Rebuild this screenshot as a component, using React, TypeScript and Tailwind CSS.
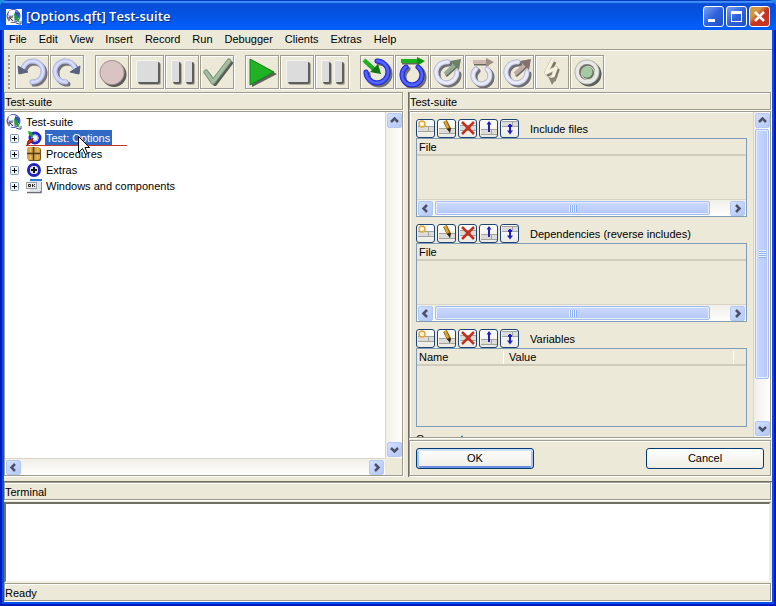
import { useState } from "react";
import type { ReactNode } from "react";
import clsx from "clsx";

const etched =
  "border border-[#9f9c8e] shadow-[1px_1px_0_#fff,inset_1px_1px_0_#fff]";

const menus = [
  "File",
  "Edit",
  "View",
  "Insert",
  "Record",
  "Run",
  "Debugger",
  "Clients",
  "Extras",
  "Help",
];

/* ---------- toolbar drawings ---------- */

function UndoIcon({ flip = false }: { flip?: boolean }) {
  const arc = "M7 12C9 7 13 5 17 5A10.5 10.5 0 0 1 16 26";
  const head = "M2 10L3 18L12 16Z";
  const mirror = flip ? "translate(31 0) scale(-1 1)" : undefined;
  return (
    <svg viewBox="0 0 32 32" className="size-8" fill="none">
      <g transform="translate(2 2)" opacity="0.8">
        <g transform={mirror}>
          <path d={arc} stroke="#55565c" strokeWidth="5" strokeLinecap="round" />
        </g>
      </g>
      <g transform={mirror}>
        <path d={arc} stroke="#a0a8dd" strokeWidth="5" strokeLinecap="round" />
        <path d={arc} stroke="#c3caf8" strokeWidth="4" strokeLinecap="round" />
        <path d={arc} stroke="#dde1fd" strokeWidth="1.5" strokeLinecap="round" />
        <path d={head} fill="#59617f" stroke="#59617f" strokeLinejoin="round" />
      </g>
    </svg>
  );
}

function RecordIcon() {
  return (
    <svg viewBox="0 0 32 32" className="size-8">
      <circle cx="18" cy="18.5" r="12.5" fill="#5f5b58" />
      <circle cx="16" cy="16.5" r="12.5" fill="#a39594" />
      <circle cx="16" cy="16.5" r="11.5" fill="#dac3c3" />
    </svg>
  );
}

function Block({ x, width }: { x: number; width: number }) {
  return (
    <>
      <rect x={x + 3} y="7" width={width} height="22" rx="2" fill="#b0ada3" />
      <rect x={x + 2} y="6" width={width} height="22" rx="2" fill="#5f5e5b" />
      <rect x={x} y="4" width={width} height="22" rx="2" fill="#f6f6f4" />
      <rect x={x + 1} y="5" width={width - 1} height="21" rx="1" fill="#dcdcdc" />
    </>
  );
}

function StopIcon() {
  return (
    <svg viewBox="0 0 32 32" className="size-8">
      <Block x={5} width={22} />
    </svg>
  );
}

function PauseIcon() {
  return (
    <svg viewBox="0 0 32 32" className="size-8">
      <Block x={5} width={8} />
      <Block x={18} width={8} />
    </svg>
  );
}

function CheckIcon() {
  const d = "M5 16L12 26L28 5";
  return (
    <svg
      viewBox="0 0 32 32"
      className="size-8"
      fill="none"
      strokeLinecap="round"
      strokeLinejoin="round"
    >
      <path d={d} stroke="#585c56" strokeWidth="4" transform="translate(2 2)" />
      <path d={d} stroke="#7d967d" strokeWidth="5" />
      <path d={d} stroke="#a3bfa2" strokeWidth="3" />
    </svg>
  );
}

function PlayIcon() {
  return (
    <svg viewBox="0 0 32 32" className="size-8">
      <path d="M6 5L31 18L6 31Z" fill="#5f615c" />
      <path d="M4 3L28 16L4 29Z" fill="#1eb224" stroke="#148319" />
    </svg>
  );
}

interface RingProps {
  arc: string;
  shaft: string;
  head: string;
  tone: "blue" | "pale";
  arrow: string;
  tip: string;
}

function RingIcon({ arc, shaft, head, tone, arrow, tip }: RingProps) {
  const blue = tone === "blue";
  return (
    <svg viewBox="0 0 32 32" className="size-8" fill="none" strokeLinecap="round">
      <path d={arc} stroke="#706f70" strokeWidth="5" transform="translate(2 2)" />
      <path d={arc} stroke={blue ? "#1c1cc4" : "#a6a7c2"} strokeWidth="5" />
      <path d={arc} stroke={blue ? "#3240ee" : "#d6d9f0"} strokeWidth="4" />
      <path d={arc} stroke={blue ? "#5468f8" : "#ecedfa"} strokeWidth="2" />
      <g strokeLinecap="butt">
        <path d={shaft} stroke="#66685f" strokeWidth="3" transform="translate(1 2)" />
        <path d={shaft} stroke={arrow} strokeWidth="4" />
      </g>
      <path d={head} fill={tip} />
    </svg>
  );
}

function StepIntoIcon() {
  return (
    <RingIcon
      tone="blue"
      arc="M16 5A11 11 0 1 1 5 16"
      shaft="M3 4L14 14"
      head="M20 18L9 16L17 8Z"
      arrow="#18b31f"
      tip="#117816"
    />
  );
}

function StepOverIcon() {
  return (
    <RingIcon
      tone="blue"
      arc="M10 11A10 10 0 1 0 22 11"
      shaft="M5 5H22"
      head="M21 1L29 5L21 10Z"
      arrow="#18b31f"
      tip="#128f18"
    />
  );
}

function StepOutIcon({ failed = false }: { failed?: boolean }) {
  return (
    <RingIcon
      tone="pale"
      arc="M17 6A10.5 10.5 0 1 0 26 16"
      shaft="M14 18L25 8"
      head="M30 3L19 5L28 14Z"
      arrow={failed ? "#c3aaa6" : "#93ab92"}
      tip={failed ? "#84706c" : "#6d8069"}
    />
  );
}

function RepeatIcon() {
  return (
    <RingIcon
      tone="pale"
      arc="M10 13A8.5 8.5 0 1 0 21 13"
      shaft="M7 6H22"
      head="M20 2L28 6L20 11Z"
      arrow="#cdb8b2"
      tip="#a28d88"
    />
  );
}

function BoltIcon() {
  return (
    <svg viewBox="0 0 32 32" className="size-8" fill="none">
      <path
        d="M17 4L10 17L20 12L16 23"
        stroke="#77746c"
        strokeWidth="3"
        strokeLinejoin="round"
        transform="translate(2 2)"
      />
      <path d="M17 3L10 17L20 12L16 23" stroke="#c5bea6" strokeWidth="4" strokeLinejoin="round" />
      <path d="M17 3L10 17L20 12L16 23" stroke="#f7f1df" strokeWidth="3" strokeLinejoin="round" />
      <path d="M12 20L15 22L22 20L16 29Z" fill="#8c8675" />
    </svg>
  );
}

function TargetIcon() {
  return (
    <svg viewBox="0 0 32 32" className="size-8" fill="none">
      <circle cx="18" cy="18" r="12.5" fill="#5d5d59" />
      <circle cx="16" cy="16" r="12.5" fill="#b3b3ae" />
      <circle cx="16" cy="16" r="11.5" fill="#e9e9e6" />
      <circle cx="16" cy="16" r="8" fill="#77776f" />
      <circle cx="17" cy="17" r="7" fill="#dddcd2" />
      <circle cx="17" cy="17" r="6" fill="#64705f" />
      <circle cx="16" cy="16" r="5.5" fill="#a5c9a5" />
    </svg>
  );
}

const toolGroups: { label: string; icon: ReactNode }[][] = [
  [
    { label: "Undo", icon: <UndoIcon /> },
    { label: "Redo", icon: <UndoIcon flip /> },
  ],
  [
    { label: "Record", icon: <RecordIcon /> },
    { label: "Stop recording", icon: <StopIcon /> },
    { label: "Pause recording", icon: <PauseIcon /> },
    { label: "Check", icon: <CheckIcon /> },
  ],
  [
    { label: "Run", icon: <PlayIcon /> },
    { label: "Stop", icon: <StopIcon /> },
    { label: "Pause", icon: <PauseIcon /> },
  ],
  [
    { label: "Step into", icon: <StepIntoIcon /> },
    { label: "Step over", icon: <StepOverIcon /> },
    { label: "Step out", icon: <StepOutIcon /> },
    { label: "Skip over", icon: <RepeatIcon /> },
    { label: "Skip out", icon: <StepOutIcon failed /> },
    { label: "Throw exception", icon: <BoltIcon /> },
    { label: "Breakpoint", icon: <TargetIcon /> },
  ],
];

/* ---------- tree drawings ---------- */

function SuiteIcon() {
  return (
    <svg viewBox="0 0 16 16" className="size-4 shrink-0">
      <circle cx="7.5" cy="7" r="6.5" fill="#bcc2f0" stroke="#3444a8" />
      <path d="M3 2Q7 0 10 2L8 6L3 6Z" fill="#fff" />
      <path d="M9 2L14 4L13 9L9 8Z" fill="#3050c0" />
      <path d="M8 4L11 7L12 4V9L14 14L10 11L9 13Z" fill="#1ba526" />
      <rect x="2" y="7" width="6" height="6" fill="#eceaf6" />
      <path d="M3 12V8H7M4 9L7 12" fill="none" stroke="#20242c" />
      <path d="M10 14L13 15H15V12" fill="none" stroke="#394a70" />
    </svg>
  );
}

function TestIcon() {
  return (
    <svg viewBox="0 0 16 16" className="size-4 shrink-0" fill="none">
      <circle cx="9" cy="8" r="5" stroke="#2328c8" strokeWidth="3" />
      <circle cx="9" cy="8" r="3" stroke="#a9b8f8" />
      <path d="M2 1L6 2L7 8L3 5Z" fill="#18a824" />
      <path d="M1 15L2 11L7 8L6 12Z" fill="#c52f22" stroke="#8d1f18" />
    </svg>
  );
}

function ProceduresIcon() {
  return (
    <svg viewBox="0 0 16 16" className="size-4 shrink-0">
      <rect x="2" y="2" width="13" height="13" rx="2" fill="#6b5428" />
      <rect x="1" y="1" width="13" height="13" rx="2" fill="#d7a544" />
      <path d="M7.5 1V14M1 7.5H14" stroke="#4f3a12" strokeWidth="1.5" />
      <path d="M4.5 2V6M11.5 2V6M4.5 9V13M11.5 9V13" stroke="#e9c070" />
    </svg>
  );
}

function ExtrasIcon() {
  return (
    <svg viewBox="0 0 16 16" className="size-4 shrink-0" fill="none">
      <circle cx="8" cy="8" r="5.5" stroke="#2226b4" strokeWidth="3" />
      <circle cx="8" cy="8" r="4" fill="#e2e4fa" />
      <path d="M8 5V11M5 8H11" stroke="#11131c" strokeWidth="2" />
    </svg>
  );
}

function WindowsIcon() {
  return (
    <svg viewBox="0 0 16 16" className="size-4 shrink-0">
      <path d="M1 14.5H15V4" fill="none" stroke="#676d76" strokeWidth="1.5" />
      <rect x="4" y="1" width="11" height="12" fill="#dfe6ec" />
      <rect x="4" y="1" width="12" height="2" fill="#2a7ad0" />
      <rect x="0.5" y="4.5" width="10" height="6" fill="#f2f2f0" stroke="#9da0a3" />
      <path d="M2.5 6.5H4.5V8.5H2.5ZM6.5 6V9M9 6L7.5 7.5L9 9" fill="none" stroke="#222" />
    </svg>
  );
}

const treeNodes: { label: string; icon: ReactNode }[] = [
  { label: "Test: Options", icon: <TestIcon /> },
  { label: "Procedures", icon: <ProceduresIcon /> },
  { label: "Extras", icon: <ExtrasIcon /> },
  { label: "Windows and components", icon: <WindowsIcon /> },
];

function PlusBox() {
  return (
    <svg viewBox="0 0 9 9" className="size-[9px]">
      <rect x="0.5" y="0.5" width="8" height="8" rx="1" fill="#f4f3ef" stroke="#7b9ac0" />
      <path d="M2 4.5H7M4.5 2V7" stroke="#000" />
    </svg>
  );
}

function MousePointer() {
  return (
    <svg
      viewBox="0 0 12 20"
      className="pointer-events-none absolute top-[6px] left-[33px] h-5 w-3"
    >
      <path
        d="M0.5 0.5V16.5L4.5 12.5L7.5 18.5L9.5 17.5L7 11.5H11.5Z"
        fill="#fff"
        stroke="#000"
      />
    </svg>
  );
}

/* ---------- scroll bars ---------- */

const arrows = {
  up: "M4 9L7.5 5.5L11 9",
  down: "M4 6L7.5 9.5L11 6",
  left: "M9 4L5.5 7.5L9 11",
  right: "M6 4L9.5 7.5L6 11",
};

function ScrollButton({ dir }: { dir: keyof typeof arrows }) {
  return (
    <button
      type="button"
      aria-label={`Scroll ${dir}`}
      className="size-[15px] shrink-0 rounded-xs border border-[#b4c9f2] bg-linear-to-br from-[#d3e0fe] to-[#b3c8f6]"
    >
      <svg viewBox="1 1 13 13" className="size-[13px]">
        <path d={arrows[dir]} fill="none" stroke="#4d5168" strokeWidth="2.5" />
      </svg>
    </button>
  );
}

function ScrollBar({
  vertical = false,
  thumb,
}: {
  vertical?: boolean;
  thumb?: string;
}) {
  return (
    <div
      className={clsx(
        "flex shrink-0 border-[#d8d5c8] p-px",
        vertical
          ? "w-[17px] flex-col border-l bg-linear-to-r from-[#f1efe9] to-[#fefefc]"
          : "h-[17px] border-t bg-linear-to-b from-[#f1efe9] to-[#fefefc]",
      )}
    >
      <ScrollButton dir={vertical ? "up" : "left"} />
      <div
        className={clsx(
          "flex min-h-0 min-w-0 flex-1",
          vertical ? "flex-col py-px" : "px-[2px]",
        )}
      >
        {thumb && (
          <div
            className={clsx(
              "flex items-center justify-center rounded-xs border border-[#a3bdec] from-[#cbd9fd] to-[#b4c8f7] shadow-[inset_0_0_0_1px_#e6eefe]",
              vertical ? "bg-linear-to-r" : "bg-linear-to-b",
              thumb,
            )}
          >
            <span
              className={clsx(
                vertical
                  ? "h-2 w-[7px] bg-[repeating-linear-gradient(to_bottom,#eef4fe_0_1px,#8cb0f8_1px_2px)]"
                  : "h-[7px] w-2 bg-[repeating-linear-gradient(to_right,#eef4fe_0_1px,#8cb0f8_1px_2px)]",
              )}
            />
          </div>
        )}
      </div>
      <ScrollButton dir={vertical ? "down" : "right"} />
    </div>
  );
}

/* ---------- detail form ---------- */

const Cells = ({ y }: { y: number }) => (
  <>
    <rect x="0" y={y} width="16" height="6" fill="#dcdbd6" />
    <path
      d={`M0 ${y + 0.5}H16M0 ${y + 5.5}H16M10.5 ${y}V${y + 6}`}
      stroke="#a3a3a0"
      fill="none"
    />
  </>
);

const rowActions: { label: string; icon: ReactNode }[] = [
  {
    label: "New row",
    icon: (
      <>
        <Cells y={6} />
        <circle cx="4" cy="4" r="3" fill="#fff6d8" stroke="#e0a63c" strokeWidth="1.5" />
      </>
    ),
  },
  {
    label: "Edit row",
    icon: (
      <>
        <Cells y={8} />
        <path d="M6 1L10 9" stroke="#7d5a14" strokeWidth="4" />
        <path d="M6 1L9 8" stroke="#d9a636" strokeWidth="2.5" />
        <path d="M8 9L11 13L12 8Z" fill="#2b2111" />
      </>
    ),
  },
  {
    label: "Delete row",
    icon: (
      <>
        <Cells y={5} />
        <path d="M2 2L14 14M14 2L2 14" stroke="#c4301e" strokeWidth="2.5" />
      </>
    ),
  },
  {
    label: "Move row up",
    icon: (
      <>
        <Cells y={9} />
        <path d="M8 2V12" stroke="#2020c8" strokeWidth="2" />
        <path d="M5.5 4.5L8 1L10.5 4.5Z" fill="#2020c8" />
      </>
    ),
  },
  {
    label: "Move row down",
    icon: (
      <>
        <Cells y={1} />
        <path d="M8 4V13" stroke="#2020c8" strokeWidth="2" />
        <path d="M5 10.5L8 14.5L11 10.5Z" fill="#2020c8" />
        <path d="M6 6H10" stroke="#2020c8" strokeWidth="2" />
      </>
    ),
  },
];

function TableSection({
  title,
  columns,
  scroll = false,
}: {
  title: string;
  columns: string[];
  scroll?: boolean;
}) {
  const split = columns.length > 1;

  return (
    <section className="pb-[6px]">
      <div className="flex h-5 items-center gap-[2px]">
        {rowActions.map((action) => (
          <button
            key={action.label}
            type="button"
            aria-label={`${action.label}: ${title}`}
            className="flex size-[19px] items-center justify-center rounded-[3px] border border-[#1d4474] bg-linear-to-b from-white to-[#eceae2]"
          >
            <svg viewBox="0 0 16 16" className="size-4">
              {action.icon}
            </svg>
          </button>
        ))}
        <h2 className="pt-[2px] pl-[9px]">{title}</h2>
      </div>
      <div className="flex h-[79px] flex-col border border-[#7f9db9]">
        <table className="w-full table-fixed border-collapse text-left">
          <thead>
            <tr className="h-4 border-b-2 border-[#d0ccbc]">
              {columns.map((column, i) => (
                <th
                  key={column}
                  className={clsx(
                    "p-0 pt-[2px] pl-[2px] leading-[13px] font-normal",
                    split && i === 0 && "w-[90px]",
                  )}
                >
                  <div
                    className={clsx(
                      split && "border-r border-white",
                      split && (i === columns.length - 1 ? "mr-[12px]" : "mr-[3px]"),
                    )}
                  >
                    {column}
                  </div>
                </th>
              ))}
            </tr>
          </thead>
        </table>
        {scroll && (
          <div className="mt-auto">
            <ScrollBar thumb="w-[94%]" />
          </div>
        )}
      </div>
    </section>
  );
}

function PanelHeader({ children }: { children: ReactNode }) {
  return (
    <h1 className={clsx(etched, "h-[18px] shrink-0 leading-[18px]")}>
      {children}
    </h1>
  );
}

function TreePanel() {
  const [selected, setSelected] = useState("Test: Options");

  return (
    <section className="flex min-h-0 min-w-0 flex-col gap-px pr-px pb-px">
      <PanelHeader>Test-suite</PanelHeader>
      <div className={clsx(etched, "flex min-h-0 flex-1 flex-col")}>
        <div className="flex min-h-0 flex-1">
          <div className="min-w-0 flex-1 bg-white pt-[2px] pl-px">
            <div className="flex h-4 items-center gap-1">
              <SuiteIcon />
              <span>Test-suite</span>
            </div>
            <ul>
              {treeNodes.map(({ label, icon }) => (
                <li key={label} className="flex h-4 items-center pl-1">
                  <button type="button" aria-label={`Expand ${label}`} className="mr-[7px]">
                    <PlusBox />
                  </button>
                  <div
                    className={clsx(
                      "relative flex h-4 items-center gap-[3px]",
                      selected === label && "z-10 border-b border-[#c0392b] pr-[15px]",
                    )}
                  >
                    {icon}
                    <button
                      type="button"
                      onClick={() => setSelected(label)}
                      className={clsx(
                        "h-full pr-[2px] pl-px leading-4 whitespace-nowrap",
                        selected === label && "bg-[#316ac5] text-white",
                      )}
                    >
                      {label}
                    </button>
                    {selected === label && (
                      <span className="absolute top-0 left-[19px]">
                        <MousePointer />
                      </span>
                    )}
                  </div>
                </li>
              ))}
            </ul>
          </div>
          <ScrollBar vertical />
        </div>
        <div className="flex">
          <div className="flex-1">
            <ScrollBar />
          </div>
          <div className="w-[17px]" />
        </div>
      </div>
    </section>
  );
}

function DetailPanel() {
  return (
    <section className="flex min-h-0 min-w-0 flex-col gap-px border-l border-[#716f64] pr-px pb-px">
      <PanelHeader>Test-suite</PanelHeader>
      <div className={clsx(etched, "flex min-h-0 flex-1")}>
        <div className="min-w-0 flex-1 overflow-hidden px-[6px] pt-[6px]">
          <TableSection title="Include files" columns={["File"]} scroll />
          <TableSection title="Dependencies (reverse includes)" columns={["File"]} scroll />
          <TableSection title="Variables" columns={["Name", "Value"]} />
          <h2>Comment</h2>
        </div>
        <ScrollBar vertical thumb="h-[86%]" />
      </div>
      <div
        className={clsx(
          etched,
          "mt-px flex h-9 shrink-0 items-center justify-between px-[6px] pt-px",
        )}
      >
        <button
          type="button"
          className="h-[21px] w-[118px] rounded-[3px] border border-[#003c74] bg-linear-to-b from-white to-[#eeece4] shadow-[inset_0_2px_0_#cfe0fc,inset_2px_0_0_#a9c3f3,inset_-2px_0_0_#a9c3f3,inset_0_-2px_0_#6e8fdf]"
        >
          OK
        </button>
        <button
          type="button"
          className="h-[21px] w-[118px] rounded-[3px] border border-[#003c74] bg-linear-to-b from-white to-[#eeece4]"
        >
          Cancel
        </button>
      </div>
    </section>
  );
}

function TitleBar() {
  const box =
    "flex size-[21px] items-center justify-center rounded-[3px] border border-white";
  const blue = "bg-linear-to-br from-[#7ba0f4] via-[#2e62dc] to-[#2350c4]";

  return (
    <header className="flex h-[30px] shrink-0 items-center bg-linear-to-b from-[#0a4bd0] via-[#0353e4] to-[#0360fc] px-[6px] pt-[3px] shadow-[inset_0_1px_0_#0a3cc0,inset_0_3px_1px_#3d8dfb]">
      <span className="flex size-4 items-center justify-center bg-white">
        <SuiteIcon />
      </span>
      <span className="ml-1 flex-1 font-['Open_Sans'] text-[13px] font-semibold text-white [text-shadow:1px_1px_0_#0a2a80]">
        [Options.qft] Test-suite
      </span>
      <div className="flex gap-[2px]">
        <button type="button" aria-label="Minimize" className={clsx(box, blue)}>
          <svg viewBox="0 0 19 19" className="size-[19px]">
            <rect x="4" y="12" width="7" height="3" fill="#fff" />
          </svg>
        </button>
        <button type="button" aria-label="Maximize" className={clsx(box, blue)}>
          <svg viewBox="0 0 19 19" className="size-[19px]">
            <rect x="4.5" y="4.5" width="10" height="10" fill="none" stroke="#fff" />
            <rect x="4" y="4" width="11" height="3" fill="#fff" />
          </svg>
        </button>
        <button
          type="button"
          aria-label="Close"
          className={clsx(box, "bg-linear-to-br from-[#cf9a44] from-30% to-[#c83420] to-50%")}
        >
          <svg viewBox="0 0 19 19" className="size-[19px]">
            <path d="M5 5L14 14M14 5L5 14" stroke="#fff" strokeWidth="2.5" />
          </svg>
        </button>
      </div>
    </header>
  );
}

export default function App() {
  return (
    <div className="h-screen bg-[#1c8fe8]">
      <div className="flex h-full flex-col overflow-hidden rounded-t-lg bg-[#0831d9] font-['Liberation_Sans',Arial,sans-serif] text-[11px] leading-[13px] text-black">
        <TitleBar />
        <div className="flex min-h-0 flex-1 flex-col border-2 border-t-0 border-[#0019bc] bg-[#0650ee] px-[2px] pb-[2px]">
          <div className="flex min-h-0 flex-1 flex-col bg-[#ece9d8]">
            <nav className="flex h-5 shrink-0 items-center border-b border-[#9f9c8e] pr-px pb-px">
              {menus.map((menu) => (
                <button key={menu} type="button" className="px-[6px] first:pl-[5px]">
                  {menu}
                </button>
              ))}
            </nav>
            <div className="flex h-[42px] shrink-0 items-center gap-[11px] border-t border-white pl-1">
              <div className="-mr-[7px] h-[34px] w-[3px] bg-[radial-gradient(circle_at_1px_1px,#9f9c8e_1px,transparent_1px)] bg-[size:3px_4px]" />
              {toolGroups.map((group, i) => (
                <div key={i} className="flex gap-px">
                  {group.map((tool) => (
                    <button
                      key={tool.label}
                      type="button"
                      aria-label={tool.label}
                      className={clsx(etched, "size-[34px]")}
                    >
                      {tool.icon}
                    </button>
                  ))}
                </div>
              ))}
            </div>
            <main className="grid min-h-0 flex-1 grid-cols-[400fr_364fr] grid-rows-1 gap-1">
              <TreePanel />
              <DetailPanel />
            </main>
            <section className="mt-1 flex h-[102px] shrink-0 flex-col border-t border-[#716f64] pr-px">
              <h1 className={clsx(etched, "h-[18px] leading-[18px]")}>
                <label htmlFor="terminal">Terminal</label>
              </h1>
              <textarea
                id="terminal"
                readOnly
                className="mt-[2px] block min-h-0 w-full flex-1 resize-none border-2 border-t-[#716f64] border-r-[#f1efe2] border-b-[#f1efe2] border-l-[#716f64] bg-white outline-none"
              />
            </section>
            <footer className="shrink-0 pr-px pb-px">
              <p className={clsx(etched, "h-[18px] leading-[18px]")}>Ready</p>
            </footer>
          </div>
        </div>
      </div>
    </div>
  );
}
